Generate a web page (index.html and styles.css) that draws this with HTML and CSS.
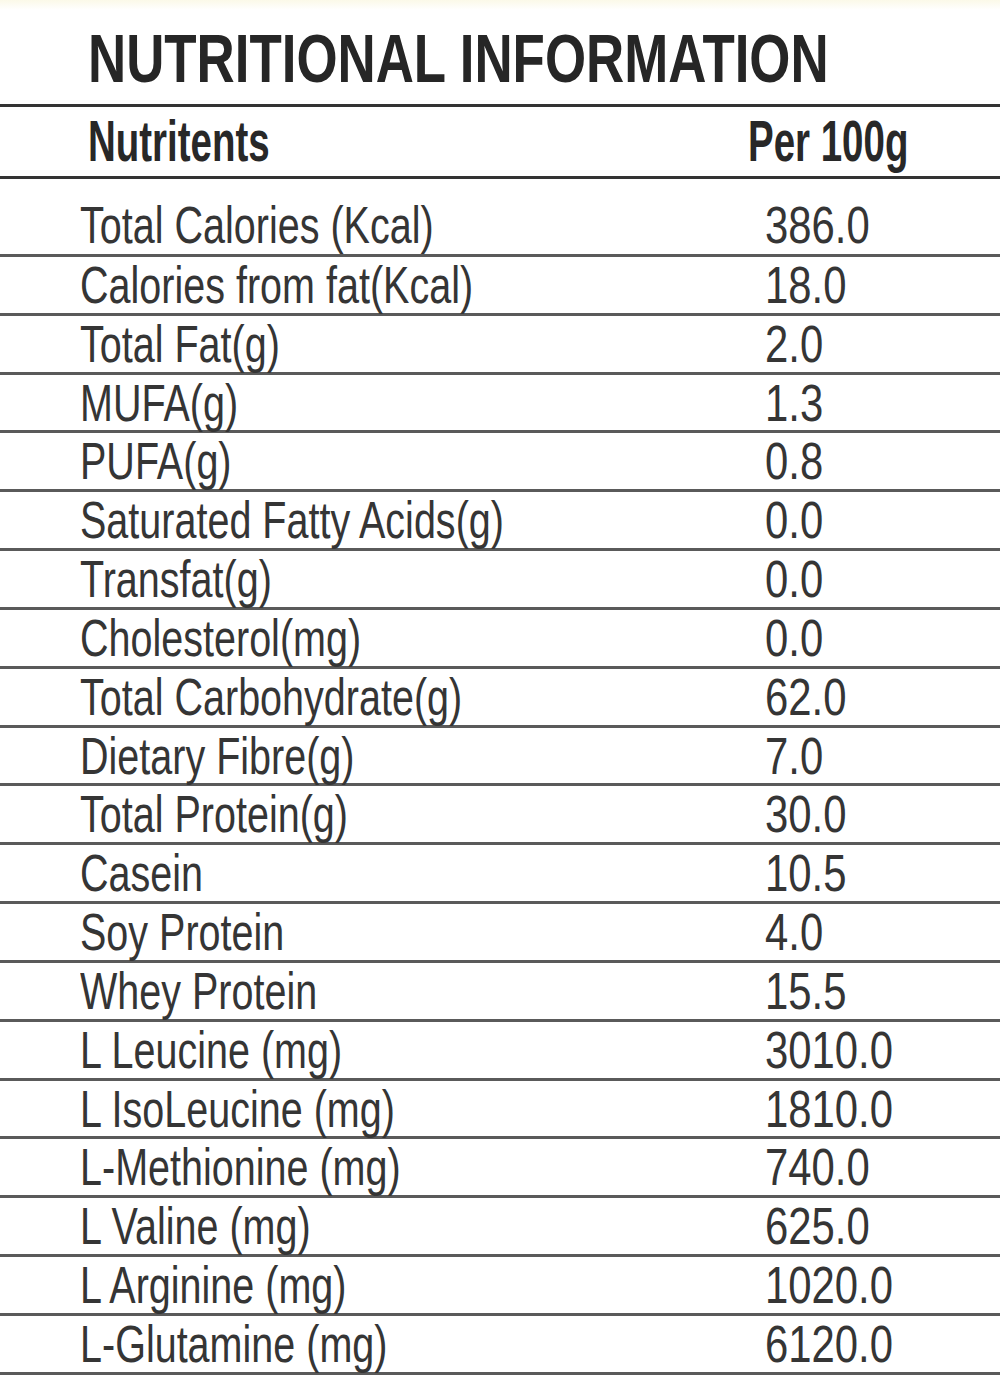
FILE: index.html
```html
<!DOCTYPE html>
<html lang="en">
<head>
<meta charset="utf-8">
<title>Nutritional Information</title>
<link rel="stylesheet" href="styles.css">
</head>
<body>
<div class="label">
  <h1 class="title"><span class="squeeze-title">NUTRITIONAL INFORMATION</span></h1>
  <div class="head-row">
    <div class="head-name"><span class="squeeze-head">Nutritents</span></div>
    <div class="head-val"><span class="squeeze-head">Per 100g</span></div>
  </div>
  <div class="rows">
    <div class="row"><div class="name"><span class="squeeze-name">Total Calories (Kcal)</span></div><div class="val"><span class="squeeze-val">386.0</span></div></div>
    <div class="row"><div class="name"><span class="squeeze-name">Calories from fat(Kcal)</span></div><div class="val"><span class="squeeze-val">18.0</span></div></div>
    <div class="row"><div class="name"><span class="squeeze-name">Total Fat(g)</span></div><div class="val"><span class="squeeze-val">2.0</span></div></div>
    <div class="row"><div class="name"><span class="squeeze-name">MUFA(g)</span></div><div class="val"><span class="squeeze-val">1.3</span></div></div>
    <div class="row"><div class="name"><span class="squeeze-name">PUFA(g)</span></div><div class="val"><span class="squeeze-val">0.8</span></div></div>
    <div class="row"><div class="name"><span class="squeeze-name">Saturated Fatty Acids(g)</span></div><div class="val"><span class="squeeze-val">0.0</span></div></div>
    <div class="row"><div class="name"><span class="squeeze-name">Transfat(g)</span></div><div class="val"><span class="squeeze-val">0.0</span></div></div>
    <div class="row"><div class="name"><span class="squeeze-name">Cholesterol(mg)</span></div><div class="val"><span class="squeeze-val">0.0</span></div></div>
    <div class="row"><div class="name"><span class="squeeze-name">Total Carbohydrate(g)</span></div><div class="val"><span class="squeeze-val">62.0</span></div></div>
    <div class="row"><div class="name"><span class="squeeze-name">Dietary Fibre(g)</span></div><div class="val"><span class="squeeze-val">7.0</span></div></div>
    <div class="row"><div class="name"><span class="squeeze-name">Total Protein(g)</span></div><div class="val"><span class="squeeze-val">30.0</span></div></div>
    <div class="row"><div class="name"><span class="squeeze-name">Casein</span></div><div class="val"><span class="squeeze-val">10.5</span></div></div>
    <div class="row"><div class="name"><span class="squeeze-name">Soy Protein</span></div><div class="val"><span class="squeeze-val">4.0</span></div></div>
    <div class="row"><div class="name"><span class="squeeze-name">Whey Protein</span></div><div class="val"><span class="squeeze-val">15.5</span></div></div>
    <div class="row"><div class="name"><span class="squeeze-name">L Leucine (mg)</span></div><div class="val"><span class="squeeze-val">3010.0</span></div></div>
    <div class="row"><div class="name"><span class="squeeze-name">L IsoLeucine (mg)</span></div><div class="val"><span class="squeeze-val">1810.0</span></div></div>
    <div class="row"><div class="name"><span class="squeeze-name">L-Methionine (mg)</span></div><div class="val"><span class="squeeze-val">740.0</span></div></div>
    <div class="row"><div class="name"><span class="squeeze-name">L Valine (mg)</span></div><div class="val"><span class="squeeze-val">625.0</span></div></div>
    <div class="row"><div class="name"><span class="squeeze-name">L Arginine (mg)</span></div><div class="val"><span class="squeeze-val">1020.0</span></div></div>
    <div class="row"><div class="name"><span class="squeeze-name">L-Glutamine (mg)</span></div><div class="val"><span class="squeeze-val">6120.0</span></div></div>
  </div>
</div>
</body>
</html>
```
FILE: styles.css
```css
html, body {
  margin: 0;
  padding: 0;
}
body {
  width: 1000px;
  height: 1375px;
  overflow: hidden;
  background: linear-gradient(#fbf9e8 0, #ffffff 10px) no-repeat, #ffffff;
  font-family: "Liberation Sans", Arial, "Helvetica", sans-serif;
  color: #353535;
}
.label {
  width: 1000px;
}
.title {
  margin: 0;
  padding: 24px 0 12px 88px;
  height: 68px;
  font-size: 68px;
  line-height: 68px;
  font-weight: 700;
  color: #262626;
  border-bottom: 3px solid #333333;
  white-space: nowrap;
}
.squeeze-title,
.squeeze-head,
.squeeze-name,
.squeeze-val {
  display: inline-block;
  transform-origin: left center;
  white-space: nowrap;
}
.squeeze-title { transform: scaleX(0.777); }
.squeeze-head { transform: scaleX(0.675); }
.squeeze-name { transform: scaleX(0.76); }
.squeeze-val { transform: scaleX(0.805); }

.head-row {
  display: flex;
  height: 57px;
  padding: 6px 0 6px 0;
  font-size: 57px;
  line-height: 57px;
  font-weight: 700;
  color: #282828;
  border-bottom: 3px solid #333333;
}
.head-name {
  width: 748px;
  padding-left: 88px;
  box-sizing: border-box;
}
.head-val {
  flex: 1;
}
.rows {
  display: flex;
  flex-direction: column;
}
.row {
  display: flex;
  box-sizing: border-box;
  height: 58.84px;
  font-size: 52px;
  line-height: 56px;
  border-bottom: 3px solid #5a5a5a;
}
.row:first-child {
  height: 78px;
  padding-top: 18px;
}
.name {
  width: 765px;
  padding-left: 80px;
  box-sizing: border-box;
}
.val {
  flex: 1;
}
```
